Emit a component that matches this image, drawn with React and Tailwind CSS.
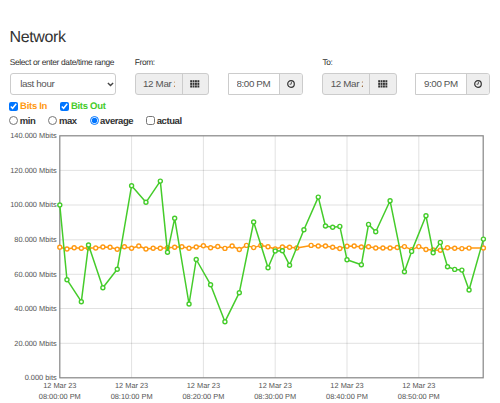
import React, { useState } from 'react';

// Plot area inside the chart svg
const LEFT = 59.8;
const RIGHT = 483.2;
const TOP = 5.8;
const BOTTOM = 247.8;
const MINUTE = 7.18;

const yTicks = [
  { label: '140.000 Mbits', y: 5.8 },
  { label: '120.000 Mbits', y: 40.4 },
  { label: '100.000 Mbits', y: 75 },
  { label: '80.000 Mbits', y: 109.8 },
  { label: '60.000 Mbits', y: 144.3 },
  { label: '40.000 Mbits', y: 178.5 },
  { label: '20.000 Mbits', y: 213.3 },
  { label: '0.000 bits', y: 247.8 },
];

const xTicks = [
  { minute: 0, time: '08:00:00 PM' },
  { minute: 10, time: '08:10:00 PM' },
  { minute: 20, time: '08:20:00 PM' },
  { minute: 30, time: '08:30:00 PM' },
  { minute: 40, time: '08:40:00 PM' },
  { minute: 50, time: '08:50:00 PM' },
];

// [minute, y]
const bitsIn = [
  [0, 117.3], [1, 119], [2, 117.7], [3, 118.2], [4, 118], [5, 118], [6, 117], [7, 117.3],
  [8, 119.3], [9, 116.7], [10, 118.3], [11, 116], [12, 119], [13, 118.2], [14, 118.2],
  [15, 117.7], [16, 117.3], [17, 116.7], [18, 118.2], [19, 117], [20, 115.7], [21, 117.7],
  [22, 116.5], [23, 118.4], [24, 116], [25, 119.5], [26, 115.4], [27, 117.6], [28, 115.4],
  [29, 116.7], [30, 119], [31, 117], [32, 117.3], [33, 118], [35, 115.4], [36, 116], [37, 116],
  [38, 117.3], [39, 118.5], [40, 116.3], [41, 116], [42, 117], [43, 116.7], [44, 118], [45, 118],
  [46, 118], [47, 117.5], [48, 116.6], [49, 119.6], [50, 116.6], [51, 119.5], [52, 120],
  [53, 120.3], [54, 117.7], [55, 118.3], [56, 118.6], [57, 118.1], [59, 118],
];

const bitsOut = [
  [0, 75], [1, 149.7], [3, 171.7], [4, 115], [6, 157.7], [8, 139.3], [10, 55.7], [12, 72.3],
  [14, 51.1], [15, 122.3], [16, 88.3], [18, 174], [19, 129.5], [21, 154.7], [23, 191.7],
  [25, 162.7], [27, 92], [29, 137.8], [30, 121], [31, 120.8], [32, 135.2], [34, 99.7], [36, 67.1],
  [37, 96], [38, 97.3], [39, 96.4], [40, 129.7], [42, 134.8], [43, 94.4], [44, 101.7], [46, 70.8],
  [48, 141.7], [49, 121.4], [51, 85.8], [52, 122.7], [53, 112.4], [54, 136.8], [55, 139.4],
  [56, 140.1], [57, 160], [59, 109.1],
];

const modes = ['min', 'max', 'average'];

const toX = (minute) => LEFT + minute * MINUTE;

const Series = ({ points, color }) => (
  <g stroke={color} strokeWidth="1.5">
    <polyline
      fill="none"
      strokeLinejoin="round"
      points={points.map(([minute, y]) => `${toX(minute)},${y}`).join(' ')}
    />
    {points.map(([minute, y]) => (
      <circle key={minute} cx={toX(minute)} cy={y} r="2" fill="#fff" strokeWidth="1.4" />
    ))}
  </g>
);

const Chart = ({ showIn, showOut }) => (
  <svg className="block" width="500" height="273" viewBox="0 0 500 273">
    <g stroke="#000" strokeOpacity="0.15" strokeWidth="0.8">
      {yTicks.slice(1, -1).map(({ label, y }) => (
        <line key={label} x1={LEFT} x2={RIGHT} y1={y} y2={y} />
      ))}
      {xTicks.slice(1).map(({ minute, time }) => (
        <line key={time} x1={toX(minute)} x2={toX(minute)} y1={TOP} y2={BOTTOM} />
      ))}
    </g>
    <rect
      x={LEFT}
      y={TOP}
      width={RIGHT - LEFT}
      height={BOTTOM - TOP}
      fill="none"
      stroke="#858585"
      strokeWidth="1.2"
    />
    {showIn && <Series points={bitsIn} color="#ff9912" />}
    {showOut && <Series points={bitsOut} color="#45cc2b" />}
    <g fill="#545454" fontSize="7.4">
      {yTicks.map(({ label, y }) => (
        <text key={label} x="56.7" y={y + 2.2} textAnchor="end">{label}</text>
      ))}
      {xTicks.map(({ minute, time }) => (
        <g key={time} textAnchor="middle">
          <text x={toX(minute)} y="258.4">12 Mar 23</text>
          <text x={toX(minute)} y="269.2">{time}</text>
        </g>
      ))}
    </g>
  </svg>
);

const GridIcon = () => (
  <svg className="mb-px" width="10" height="8" viewBox="0 0 10 8" fill="#333">
    {[0.2, 2.8, 5.4].map((y) =>
      [0.2, 2.6, 5, 7.4].map((x) => <rect key={`${x}-${y}`} x={x} y={y} width="1.9" height="2.1" />)
    )}
  </svg>
);

const ClockIcon = () => (
  <svg width="8" height="8" viewBox="0 0 8 8" fill="none" stroke="#333">
    <circle cx="4" cy="4" r="3.3" strokeWidth="1.2" />
    <path d="M4.5 1.8L4.2 4.2H2.6" strokeWidth="0.8" />
  </svg>
);

const DateGroup = ({ value }) => (
  <div className="flex h-[21.5px] w-[74.5px] overflow-hidden rounded-[3px] border border-[#ccc] bg-[#eee]">
    <div className="flex w-[47px] items-center border-r border-[#ccc] pr-[6.5px] pl-[7.5px]">
      <input className="w-full min-w-0 bg-transparent tracking-[-0.35px] text-[#555]" readOnly value={value} />
    </div>
    <div className="flex flex-1 items-center justify-center">
      <GridIcon />
    </div>
  </div>
);

const TimeGroup = ({ value }) => (
  <div className="flex h-[21.5px] w-[75px] overflow-hidden rounded-r-[3px] border border-[#ccc] bg-white">
    <div className="flex w-[51px] items-center border-r border-[#ccc] pl-[7.5px]">
      <input className="w-full min-w-0 bg-transparent tracking-[-0.4px] text-[#555]" readOnly value={value} />
    </div>
    <div className="flex flex-1 items-center justify-center bg-[#eee]">
      <ClockIcon />
    </div>
  </div>
);

export default function App() {
  const [range, setRange] = useState('last hour');
  const [showIn, setShowIn] = useState(true);
  const [showOut, setShowOut] = useState(true);
  const [mode, setMode] = useState('average');
  const [actual, setActual] = useState(false);

  return (
    <div className="h-[403px] w-[500px] overflow-hidden bg-white font-['Liberation_Sans',Arial,sans-serif] text-[#333] [text-rendering:geometricPrecision]">
      <h1 className="h-[47px] pt-[28px] pl-[9.5px] text-[16px] leading-5 tracking-[-0.35px]">Network</h1>

      <div className="grid grid-cols-[125px_187.7px_auto] pt-2.5 pl-[9.7px] text-[8.4px] leading-[10px] tracking-[-0.34px]">
        <span>Select or enter date/time range</span>
        <span>From:</span>
        <span>To:</span>
      </div>

      <div className="grid grid-cols-[125px_93.5px_94.2px_93.3px_auto] pt-[6.3px] pl-[9.5px] text-[9.8px] text-[#555]">
        <div className="relative h-[21.5px] w-[106.5px]">
          <select
            className="h-full w-full appearance-none rounded-[3px] border border-[#ccc] bg-white pl-[9.7px] tracking-[-0.38px]"
            value={range}
            onChange={(e) => setRange(e.target.value)}
          >
            <option>last hour</option>
            <option>last day</option>
          </select>
          <svg className="pointer-events-none absolute top-[8.5px] right-[2.5px]" width="7" height="5" viewBox="0 0 7 5">
            <path d="M0.9 0.9L3.5 3.5L6.1 0.9" fill="none" stroke="#444" strokeWidth="1.4" />
          </svg>
        </div>
        <DateGroup value="12 Mar 23" />
        <TimeGroup value="8:00 PM" />
        <DateGroup value="12 Mar 23" />
        <TimeGroup value="9:00 PM" />
      </div>

      <div className="mt-[5px] flex h-[14px] items-center gap-[13px] pl-[9.3px] text-[9.5px] leading-[11px] font-bold tracking-[-0.29px]">
        <label className="flex items-center gap-[1.8px] text-[#ff9912]">
          <input type="checkbox" className="size-[9px]" checked={showIn} onChange={() => setShowIn(!showIn)} />
          Bits In
        </label>
        <label className="flex items-center gap-[1.8px] text-[#45cc2b]">
          <input type="checkbox" className="size-[9px]" checked={showOut} onChange={() => setShowOut(!showOut)} />
          Bits Out
        </label>
      </div>

      <div className="mb-[1.2px] flex h-[15px] items-center gap-[12.9px] pl-[9.3px] text-[9.5px] leading-[11px] font-bold tracking-[-0.4px]">
        {modes.map((name) => (
          <label key={name} className="flex items-center gap-[1.5px]">
            <input type="radio" name="mode" className="mb-[1.5px] size-[9px]" checked={mode === name} onChange={() => setMode(name)} />
            {name}
          </label>
        ))}
        <label className="flex items-center gap-[1.5px]">
          <input type="checkbox" className="mb-[1.5px] size-[9px]" checked={actual} onChange={() => setActual(!actual)} />
          actual
        </label>
      </div>

      <Chart showIn={showIn} showOut={showOut} />
    </div>
  );
}
